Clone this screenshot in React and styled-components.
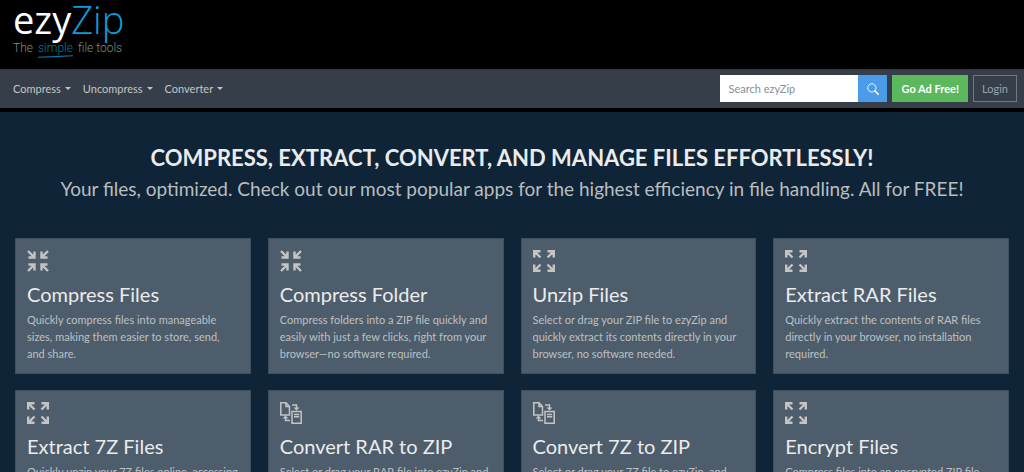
import styled, { createGlobalStyle } from 'styled-components';

const GlobalStyle = createGlobalStyle`
  *, *::before, *::after {
    box-sizing: border-box;
  }

  body {
    margin: 0;
    background-color: #0f2537;
    color: #ebebeb;
    font-family: Lato, "Liberation Sans", sans-serif;
    font-size: 11px;
    line-height: 17px;
  }
`;

const Header = styled.header`
  height: 69px;
  padding: 0 13px;
  background-color: #000000;
`;

const Logo = styled.a`
  display: inline-block;
  color: #ffffff;
  text-decoration: none;
`;

const LogoName = styled.div`
  font-family: "Open Sans", "Noto Sans", sans-serif;
  font-size: 38px;
  line-height: 39px;
`;

const LogoZip = styled.span`
  color: #0d9ddb;
  font-weight: 300;
`;

const LogoTagline = styled.div`
  display: flex;
  gap: 5px;
  color: #7d927f;
  font-family: Roboto, sans-serif;
  font-size: 12px;
  font-weight: 300;
  line-height: 19px;
`;

const Simple = styled.span`
  position: relative;
  color: #0a7a9c;
`;

const Underline = styled.svg`
  position: absolute;
  left: 0;
  bottom: 0;
  width: 100%;
  height: 3px;
`;

const Navbar = styled.nav`
  padding: 5px 7px 6px 13px;
  display: flex;
  flex-wrap: wrap;
  align-items: center;
  justify-content: space-between;
  background-color: #363f49;
  border-top: 1px solid #2d343c;
  border-bottom: 4px solid #000000;
`;

const Menu = styled.div`
  display: flex;
  gap: 12px;
`;

const MenuButton = styled.button`
  padding: 0;
  display: flex;
  align-items: center;
  gap: 4px;
  background: none;
  border: none;
  color: #c3c5c8;
  font: inherit;

  &::after {
    content: '';
    border-top: 3px solid;
    border-left: 3px solid transparent;
    border-right: 3px solid transparent;
  }
`;

const Actions = styled.div`
  display: flex;
  gap: 5px;
`;

const Search = styled.form`
  display: flex;
`;

const SearchInput = styled.input`
  width: 138px;
  height: 27px;
  padding: 0 8px;
  background-color: #ffffff;
  border: none;
  border-radius: 0;
  color: #212529;
  font: inherit;

  &::placeholder {
    color: #868e96;
  }
`;

const SearchButton = styled.button`
  width: 29px;
  height: 27px;
  padding: 0;
  display: flex;
  align-items: center;
  justify-content: center;
  background-color: #4c9be8;
  border: none;
  color: #ffffff;
`;

const ActionLink = styled.a`
  height: 27px;
  padding: 0 8px;
  background-color: ${(props) => (props.$primary ? '#5cb85c' : 'transparent')};
  border: 1px solid ${(props) => (props.$primary ? '#5cb85c' : '#6f7985')};
  color: ${(props) => (props.$primary ? '#ffffff' : '#98a2ae')};
  font-weight: ${(props) => (props.$primary ? 700 : 400)};
  line-height: 25px;
  text-decoration: none;
`;

const Main = styled.main`
  padding: 32px 15px 16px;
`;

const Heading = styled.h1`
  margin: 0;
  font-size: 22px;
  font-weight: 700;
  line-height: 28px;
  text-align: center;
`;

const Lead = styled.p`
  margin: 0 0 32px;
  color: #b9bdc0;
  font-size: 19px;
  line-height: 34px;
  text-align: center;
`;

const Cards = styled.div`
  display: grid;
  grid-template-columns: repeat(4, 1fr);
  gap: 16px 17px;

  @media screen and (max-width: 767px) {
    grid-template-columns: repeat(2, 1fr);
  }
`;

const Card = styled.a`
  padding: 11px;
  background-color: #4e5d6c;
  border: 1px solid #3f4f5e;
  color: #ebebeb;
  text-decoration: none;
`;

const CardIcon = styled.svg`
  width: 22px;
  height: 22px;
  display: block;
  color: #c4c4c4;
`;

const CardTitle = styled.h2`
  margin: 10px 0 5px;
  font-size: 20px;
  font-weight: 400;
  line-height: 24px;
`;

const CardText = styled.p`
  margin: 0;
  color: #bcc0c3;
`;

const menus = ['Compress', 'Uncompress', 'Converter'];

const apps = [
  { icon: 'compress', title: 'Compress Files', text: 'Quickly compress files into manageable sizes, making them easier to store, send, and share.' },
  { icon: 'compress', title: 'Compress Folder', text: 'Compress folders into a ZIP file quickly and easily with just a few clicks, right from your browser—no software required.' },
  { icon: 'expand', title: 'Unzip Files', text: 'Select or drag your ZIP file to ezyZip and quickly extract its contents directly in your browser, no software needed.' },
  { icon: 'expand', title: 'Extract RAR Files', text: 'Quickly extract the contents of RAR files directly in your browser, no installation required.' },
  { icon: 'expand', title: 'Extract 7Z Files', text: 'Quickly unzip your 7Z files online, accessing their contents in your browser.' },
  { icon: 'convert', title: 'Convert RAR to ZIP', text: 'Select or drag your RAR file into ezyZip and convert it to a ZIP file.' },
  { icon: 'convert', title: 'Convert 7Z to ZIP', text: 'Select or drag your 7Z file to ezyZip, and convert it to a ZIP file.' },
  { icon: 'expand', title: 'Encrypt Files', text: 'Compress files into an encrypted ZIP file with a password.' },
];

const icons = {
  compress: (
    <g strokeWidth="2.4">
      <path d="M1 1l6 6M1.500 7.500H7.500V1.500" />
      <path d="M21 1l-6 6M20.500 7.500H14.500V1.500" />
      <path d="M1 21l6-6M1.500 14.500H7.500V20.500" />
      <path d="M21 21l-6-6M20.500 14.500H14.500V20.500" />
    </g>
  ),
  expand: (
    <g strokeWidth="2.4">
      <path d="M7.500 7.500L1.500 1.500M1.200 7.500V1.200h6.300" />
      <path d="M14.500 7.500l6-6M20.800 7.500V1.200h-6.300" />
      <path d="M7.500 14.500l-6 6M1.200 14.500v6.300h6.300" />
      <path d="M14.500 14.500l6 6M20.800 14.500v6.300h-6.300" />
    </g>
  ),
  convert: (
    <g strokeWidth="1.5">
      <path d="M.8 .8H6L9.500 4.500V13H.8zM6 .8v3.700h3.500" />
      <path d="M12 9.500h9.200v11.700H12zM14 12.500h5.200M14 14.800h5.200" />
      <path d="M12 3h4.500v3.500M10 18.500H5.500V16" />
      <path d="M13.500 5.500h6l-3 3zM2.500 16.500h6l-3-3z" fill="currentColor" stroke="none" />
    </g>
  ),
};

function App() {
  return (
    <>
      <GlobalStyle />
      <Header>
        <Logo href="#">
          <LogoName>ezy<LogoZip>Zip</LogoZip></LogoName>
          <LogoTagline>
            <span>The</span>
            <Simple>
              simple
              <Underline viewBox="0 0 34 3" preserveAspectRatio="none" fill="none" stroke="currentColor" aria-hidden="true">
                <path d="M0 2.300Q17 1.800 34 .8" />
              </Underline>
            </Simple>
            <span>file tools</span>
          </LogoTagline>
        </Logo>
      </Header>
      <Navbar>
        <Menu>
          { menus.map((name) => (
            <MenuButton type="button" key={ name }>{ name }</MenuButton>
          )) }
        </Menu>
        <Actions>
          <Search onSubmit={ (e) => e.preventDefault() }>
            <SearchInput type="search" placeholder="Search ezyZip" aria-label="Search ezyZip" />
            <SearchButton type="submit" aria-label="Search">
              <svg width="12" height="12" viewBox="0 0 16 16" fill="none" stroke="currentColor" strokeWidth="1.2" aria-hidden="true">
                <circle cx="6.500" cy="6.500" r="5.500" />
                <path d="M10.500 10.500l4.500 4.500" strokeWidth="2" strokeLinecap="round" />
              </svg>
            </SearchButton>
          </Search>
          <ActionLink href="#" $primary>Go Ad Free!</ActionLink>
          <ActionLink href="#">Login</ActionLink>
        </Actions>
      </Navbar>
      <Main>
        <Heading>COMPRESS, EXTRACT, CONVERT, AND MANAGE FILES EFFORTLESSLY!</Heading>
        <Lead>Your files, optimized. Check out our most popular apps for the highest efficiency in file handling. All for FREE!</Lead>
        <Cards>
          { apps.map(({ icon, title, text }) => (
            <Card href="#" key={ title }>
              <CardIcon viewBox="0 0 22 22" fill="none" stroke="currentColor" aria-hidden="true">
                { icons[icon] }
              </CardIcon>
              <CardTitle>{ title }</CardTitle>
              <CardText>{ text }</CardText>
            </Card>
          )) }
        </Cards>
      </Main>
    </>
  );
}

export default App;
